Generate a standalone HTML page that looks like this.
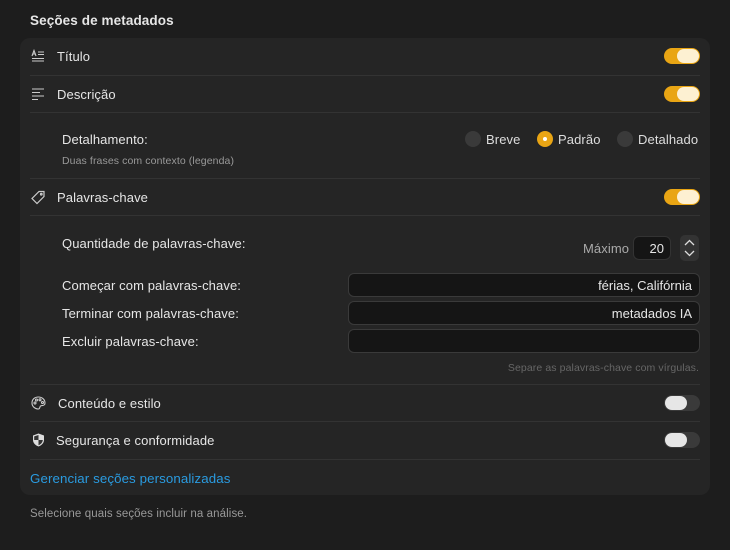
<!DOCTYPE html>
<html><head><meta charset="utf-8"><style>
*{margin:0;padding:0;box-sizing:border-box}
body{width:730px;height:550px;background:#1d1d1d;font-family:"Liberation Sans",sans-serif;color:#e6e6e6;position:relative;overflow:hidden;font-size:13px}
.a{position:absolute}
.card{left:20px;top:38px;width:690px;height:457px;background:#252525;border-radius:10px}
.t{line-height:16px;transform:translateY(-7px);white-space:nowrap;letter-spacing:0.1px}
.div{height:1px;background:#333;left:30px;width:670px}
.tog{width:36px;height:16px;border-radius:8px;left:664px}
.on{background:#e9a514}
.on::after{content:"";position:absolute;right:1px;top:1px;width:22px;height:14px;border-radius:7px;background:#fdf0d2}
.off{background:#3a3a3a}
.off::after{content:"";position:absolute;left:1px;top:1px;width:22px;height:14px;border-radius:7px;background:#e6e6e6}
.inp{left:348px;width:352px;height:24px;background:#151515;border:1px solid #3a3a3a;border-radius:6px;text-align:right;padding-right:7px;line-height:23px;font-size:13px}
.rad{width:16px;height:16px;border-radius:50%;background:#3a3a3a}
svg{position:absolute}
</style></head><body>
<div class="a t" style="left:30px;top:20px;font-weight:bold;font-size:13.5px">Seções de metadados</div>
<div class="a card"></div>

<svg style="left:31px;top:49px" width="14" height="14" viewBox="0 0 14 14" stroke="#ccc" stroke-width="1.1" fill="none"><path d="M1 7 L3 1.5 L5 7 M1.8 5 H4.2 M7 3 H13 M7 5.5 H13 M1 9.5 H13 M1 12 H13"/></svg>
<div class="a t" style="left:57px;top:56px">Título</div>
<div class="a tog on" style="top:48px"></div>
<div class="a div" style="top:75px"></div>

<svg style="left:31px;top:88px" width="14" height="13" viewBox="0 0 14 13" stroke="#ccc" stroke-width="1.1"><path d="M1 1 H13 M1 4.5 H9 M1 8 H13 M1 11.5 H7"/></svg>
<div class="a t" style="left:57px;top:94px">Descrição</div>
<div class="a tog on" style="top:86px"></div>
<div class="a div" style="top:112px"></div>

<div class="a t" style="left:62px;top:139px">Detalhamento:</div>
<div class="a t" style="left:62px;top:160px;font-size:10.5px;color:#999">Duas frases com contexto (legenda)</div>
<div class="a rad" style="left:465px;top:131px"></div>
<div class="a t" style="left:486px;top:139px;color:#ddd">Breve</div>
<div class="a rad" style="left:537px;top:131px;background:#e9a514"></div>
<div class="a" style="left:543px;top:137px;width:4px;height:4px;border-radius:50%;background:#fff"></div>
<div class="a t" style="left:558px;top:139px;color:#ddd">Padrão</div>
<div class="a rad" style="left:617px;top:131px"></div>
<div class="a t" style="left:638px;top:139px;color:#ddd">Detalhado</div>
<div class="a div" style="top:178px"></div>

<svg style="left:30px;top:190px" width="16" height="15" viewBox="0 0 16 15" stroke="#ccc" stroke-width="1.2" fill="none"><path d="M9 1.5 H14 V6.5 L7 13.5 L2 8.5 Z"/><circle cx="11.3" cy="4.2" r="0.8"/></svg>
<div class="a t" style="left:57px;top:197px">Palavras-chave</div>
<div class="a tog on" style="top:189px"></div>
<div class="a div" style="top:215px"></div>

<div class="a t" style="left:62px;top:243px">Quantidade de palavras-chave:</div>
<div class="a t" style="left:583px;top:248px;color:#aaa">Máximo</div>
<div class="a" style="left:633px;top:236px;width:38px;height:24px;background:#151515;border:1px solid #333;border-radius:6px;text-align:right;padding-right:6px;line-height:23px">20</div>
<div class="a" style="left:680px;top:235px;width:19px;height:26px;background:#333;border-radius:5px"></div>
<svg style="left:680px;top:235px" width="19" height="26" viewBox="0 0 19 26" stroke="#ddd" stroke-width="1.3" fill="none"><path d="M5 10 L9.5 5.5 L14 10 M5 16 L9.5 20.5 L14 16"/></svg>

<div class="a t" style="left:62px;top:285px">Começar com palavras-chave:</div>
<div class="a inp" style="top:273px">férias, Califórnia</div>
<div class="a t" style="left:62px;top:313px">Terminar com palavras-chave:</div>
<div class="a inp" style="top:301px">metadados IA</div>
<div class="a t" style="left:62px;top:341px">Excluir palavras-chave:</div>
<div class="a inp" style="top:329px"></div>
<div class="a t" style="right:31px;top:367px;font-size:10.5px;color:#666">Separe as palavras-chave com vírgulas.</div>
<div class="a div" style="top:384px"></div>

<svg style="left:31px;top:396px" width="15" height="14" viewBox="0 0 15 14" stroke="#ccc" stroke-width="1.1" fill="none"><path d="M7.5 1 C3.5 1 1 3.5 1 7 C1 10.5 4 13 7.5 13 C9 13 8.5 11 9.5 10 C10.5 9 14 10.5 14 7 C14 3.5 11 1 7.5 1 Z"/><circle cx="4" cy="7" r="1"/><circle cx="5.5" cy="4" r="1"/><circle cx="9" cy="3.8" r="1"/><circle cx="11.5" cy="6.5" r="1"/></svg>
<div class="a t" style="left:58px;top:403px">Conteúdo e estilo</div>
<div class="a tog off" style="top:395px"></div>
<div class="a div" style="top:421px"></div>

<svg style="left:32px;top:433px" width="13" height="14" viewBox="0 0 13 14"><path d="M6.5 0.5 L12 2.5 V7 C12 10 9.5 12.5 6.5 13.5 C3.5 12.5 1 10 1 7 V2.5 Z" fill="#ddd"/><path d="M6.5 2 V7 H10.8 C10.6 9.5 8.8 11.3 6.5 12.2 V7 H2.2 V3.4 L6.5 2 Z" fill="#333"/></svg>
<div class="a t" style="left:56px;top:440px">Segurança e conformidade</div>
<div class="a tog off" style="top:432px"></div>
<div class="a div" style="top:459px"></div>

<div class="a t" style="left:30px;top:478px;color:#2a9be0;font-size:13.3px">Gerenciar seções personalizadas</div>
<div class="a t" style="left:30px;top:513px;font-size:11.5px;color:#999">Selecione quais seções incluir na análise.</div>
</body></html>
